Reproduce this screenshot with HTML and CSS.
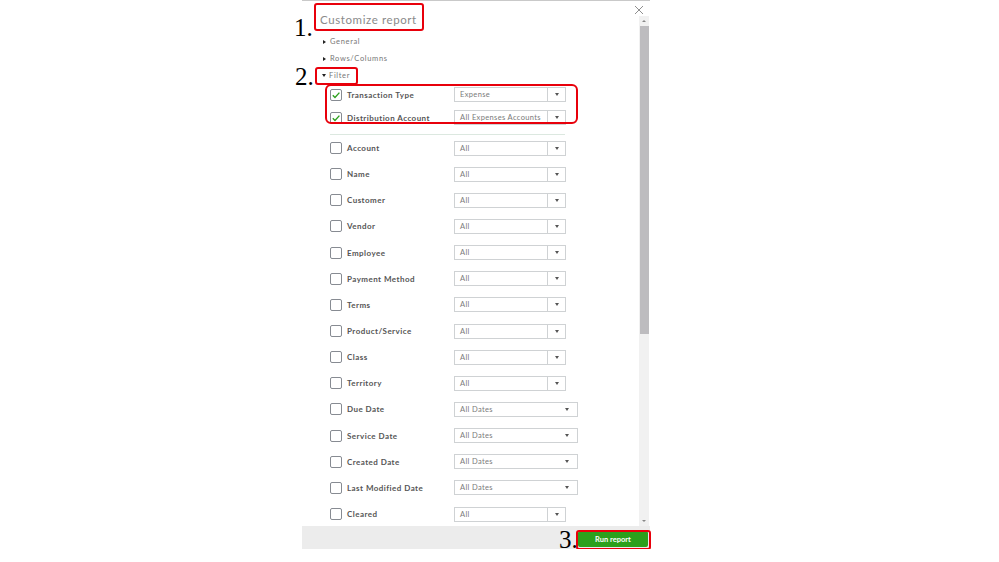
FILE: index.html
```html
<!DOCTYPE html>
<html lang="en">
  <head>
    <meta charset="UTF-8" />
    <meta name="viewport" content="width=device-width, initial-scale=1.0" />
    <title>Customize report</title>
    <link rel="stylesheet" href="styles.css">
  </head>
  <body>
    <div class="panel">
      <div class="panel-body">
        <div class="content">
          <h1 class="title">Customize report</h1>
          <div class="toggle"><span class="caret right"></span>General</div>
          <div class="toggle"><span class="caret right"></span>Rows/Columns</div>
          <div class="toggle"><span class="caret down"></span>Filter</div>

          <div class="row short first">
            <span class="check on"><svg viewBox="0 0 10 10"><path d="M1.8 5.2 4 7.4 8.4 2.6" /></svg></span>
            <span class="label">Transaction Type</span>
            <span class="select"><span class="value">Expense</span><span class="arrow"></span></span>
          </div>
          <div class="row short">
            <span class="check on"><svg viewBox="0 0 10 10"><path d="M1.8 5.2 4 7.4 8.4 2.6" /></svg></span>
            <span class="label">Distribution Account</span>
            <span class="select"><span class="value">All Expenses Accounts</span><span class="arrow"></span></span>
          </div>
          <div class="divider"></div>

          <div class="row"><span class="check"></span><span class="label">Account</span><span class="select"><span class="value">All</span><span class="arrow"></span></span></div>
          <div class="row"><span class="check"></span><span class="label">Name</span><span class="select"><span class="value">All</span><span class="arrow"></span></span></div>
          <div class="row"><span class="check"></span><span class="label">Customer</span><span class="select"><span class="value">All</span><span class="arrow"></span></span></div>
          <div class="row"><span class="check"></span><span class="label">Vendor</span><span class="select"><span class="value">All</span><span class="arrow"></span></span></div>
          <div class="row"><span class="check"></span><span class="label">Employee</span><span class="select"><span class="value">All</span><span class="arrow"></span></span></div>
          <div class="row"><span class="check"></span><span class="label">Payment Method</span><span class="select"><span class="value">All</span><span class="arrow"></span></span></div>
          <div class="row"><span class="check"></span><span class="label">Terms</span><span class="select"><span class="value">All</span><span class="arrow"></span></span></div>
          <div class="row"><span class="check"></span><span class="label">Product/Service</span><span class="select"><span class="value">All</span><span class="arrow"></span></span></div>
          <div class="row"><span class="check"></span><span class="label">Class</span><span class="select"><span class="value">All</span><span class="arrow"></span></span></div>
          <div class="row"><span class="check"></span><span class="label">Territory</span><span class="select"><span class="value">All</span><span class="arrow"></span></span></div>
          <div class="row"><span class="check"></span><span class="label">Due Date</span><span class="select date"><span class="value">All Dates</span><span class="arrow"></span></span></div>
          <div class="row"><span class="check"></span><span class="label">Service Date</span><span class="select date"><span class="value">All Dates</span><span class="arrow"></span></span></div>
          <div class="row"><span class="check"></span><span class="label">Created Date</span><span class="select date"><span class="value">All Dates</span><span class="arrow"></span></span></div>
          <div class="row"><span class="check"></span><span class="label">Last Modified Date</span><span class="select date"><span class="value">All Dates</span><span class="arrow"></span></span></div>
          <div class="row"><span class="check"></span><span class="label">Cleared</span><span class="select"><span class="value">All</span><span class="arrow"></span></span></div>
        </div>

        <div class="scrollbar">
          <span class="scroll-btn up"></span>
          <span class="thumb"></span>
          <span class="scroll-btn dn"></span>
        </div>
      </div>

      <div class="footer">
        <button class="run">Run report</button>
      </div>

      <!-- close button and step callouts sit on top of the panel -->
      <svg class="close" viewBox="0 0 10 10"><path d="M1 1 9 9M9 1 1 9" /></svg>
      <span class="step s1">1.</span>
      <span class="step s2">2.</span>
      <span class="step s3">3.</span>
      <span class="mark m1"></span>
      <span class="mark m2"></span>
      <span class="mark m3"></span>
      <span class="mark m4"></span>
    </div>
  </body>
</html>
```

FILE: styles.css
```css
body
{
  margin: 0;
  background-color: #fff;
  font-family: Lato, "Open Sans", sans-serif;
}
.panel
{
  position: relative;
  width: 348px;
  height: 549px;
  margin-left: 302px;
  border-top: 1px solid #c9c9c9;
  display: flex;
  flex-direction: column;
  box-sizing: border-box;
}
.panel-body
{
  flex: 1;
  display: flex;
  min-height: 0;
}
.content
{
  flex: 1;
  overflow: hidden;
  padding-left: 18px;
}
.title
{
  margin: 12px 0 6px;
  font-size: 11.5px;
  line-height: 14px;
  font-weight: 400;
  letter-spacing: 0.6px;
  color: #8a8a8a;
}
.toggle
{
  height: 17px;
  line-height: 17px;
  padding-left: 3px;
  font-size: 7.5px;
  letter-spacing: 0.65px;
  color: #777;
  display: flex;
  align-items: center;
}
.caret
{
  width: 0;
  height: 0;
  margin-right: 4px;
}
.caret.right
{
  border-top: 2.5px solid transparent;
  border-bottom: 2.5px solid transparent;
  border-left: 3.5px solid #222;
}
.caret.down
{
  border-left: 2.5px solid transparent;
  border-right: 2.5px solid transparent;
  border-top: 3.5px solid #222;
  margin-left: -1px;
  margin-right: 3px;
}
.row
{
  height: 26.15px;
  display: flex;
  align-items: center;
  padding-left: 10px;
}
.row.short
{
  height: 23px;
}
.row.first
{
  margin-top: -1px;
}
.check
{
  width: 12px;
  height: 12px;
  box-sizing: border-box;
  border: 1px solid #878b92;
  border-radius: 2px;
  background: #fff;
  display: flex;
  align-items: center;
  justify-content: center;
}
.check svg
{
  width: 10px;
  height: 10px;
  fill: none;
  stroke: #2ca01c;
  stroke-width: 1.4;
}
.label
{
  width: 107px;
  margin-left: 5px;
  font-size: 8px;
  font-weight: 700;
  letter-spacing: 0.45px;
  color: #555;
  white-space: nowrap;
}
.select
{
  width: 112px;
  height: 15px;
  box-sizing: border-box;
  border: 1px solid #cfd2d4;
  background: #fff;
  display: flex;
  align-items: center;
}
.select .value
{
  flex: 1;
  padding-left: 5px;
  font-size: 7.5px;
  letter-spacing: 0.35px;
  color: #7a7a7a;
  white-space: nowrap;
  overflow: hidden;
}
.select .arrow
{
  width: 17px;
  height: 100%;
  border-left: 1px solid #cfd2d4;
  display: flex;
  align-items: center;
  justify-content: center;
}
.select .arrow::after
{
  content: "";
  border-left: 2.5px solid transparent;
  border-right: 2.5px solid transparent;
  border-top: 3px solid #555;
}
.select.date
{
  width: 124px;
}
.select.date .arrow
{
  border-left: none;
  width: 20px;
}
.divider
{
  width: 235px;
  height: 1px;
  margin: 5px 0 0 10px;
  background-color: #dce8e0;
}
.scrollbar
{
  width: 10px;
  margin: 15px 1px 0 0;
  background-color: #f1f1f1;
  display: flex;
  flex-direction: column;
  align-items: center;
}
.scroll-btn
{
  height: 10px;
  display: flex;
  align-items: center;
}
.scroll-btn.up::after
{
  content: "";
  border-left: 2px solid transparent;
  border-right: 2px solid transparent;
  border-bottom: 2px solid #888;
}
.scroll-btn.dn
{
  margin-top: auto;
}
.scroll-btn.dn::after
{
  content: "";
  border-left: 2px solid transparent;
  border-right: 2px solid transparent;
  border-top: 2px solid #888;
}
.thumb
{
  width: 9px;
  height: 308px;
  background-color: #bdbcbf;
}
.footer
{
  height: 23px;
  background-color: #ececec;
  display: flex;
  align-items: center;
  justify-content: flex-end;
  padding-right: 2px;
}
.run
{
  width: 70px;
  height: 16px;
  margin-top: 3px;
  padding: 0;
  border: none;
  border-radius: 2px;
  background-color: #2ca01c;
  color: #fff;
  font-family: Lato, sans-serif;
  font-size: 7.5px;
  font-weight: 700;
}
.close
{
  position: absolute;
  left: 332px;
  top: 4px;
  width: 10px;
  height: 10px;
  fill: none;
  stroke: #8f8f8f;
  stroke-width: 1;
}
.step
{
  position: absolute;
  font-family: "Liberation Serif", serif;
  font-size: 25px;
  line-height: 25px;
  color: #000;
}
.s1 { left: -8px; top: 14px; }
.s2 { left: -7px; top: 63px; }
.s3 { left: 257px; top: 526px; }
.mark
{
  position: absolute;
  border: 2px solid #e8000b;
  border-radius: 3px;
  box-sizing: border-box;
}
.m1 { left: 12px; top: 2px; width: 110px; height: 28px; }
.m2 { left: 13px; top: 66px; width: 43px; height: 18px; }
.m3 { left: 23px; top: 83px; width: 253px; height: 40px; border-radius: 6px; }
.m4 { left: 274px; top: 529px; width: 75px; height: 20px; }
```
